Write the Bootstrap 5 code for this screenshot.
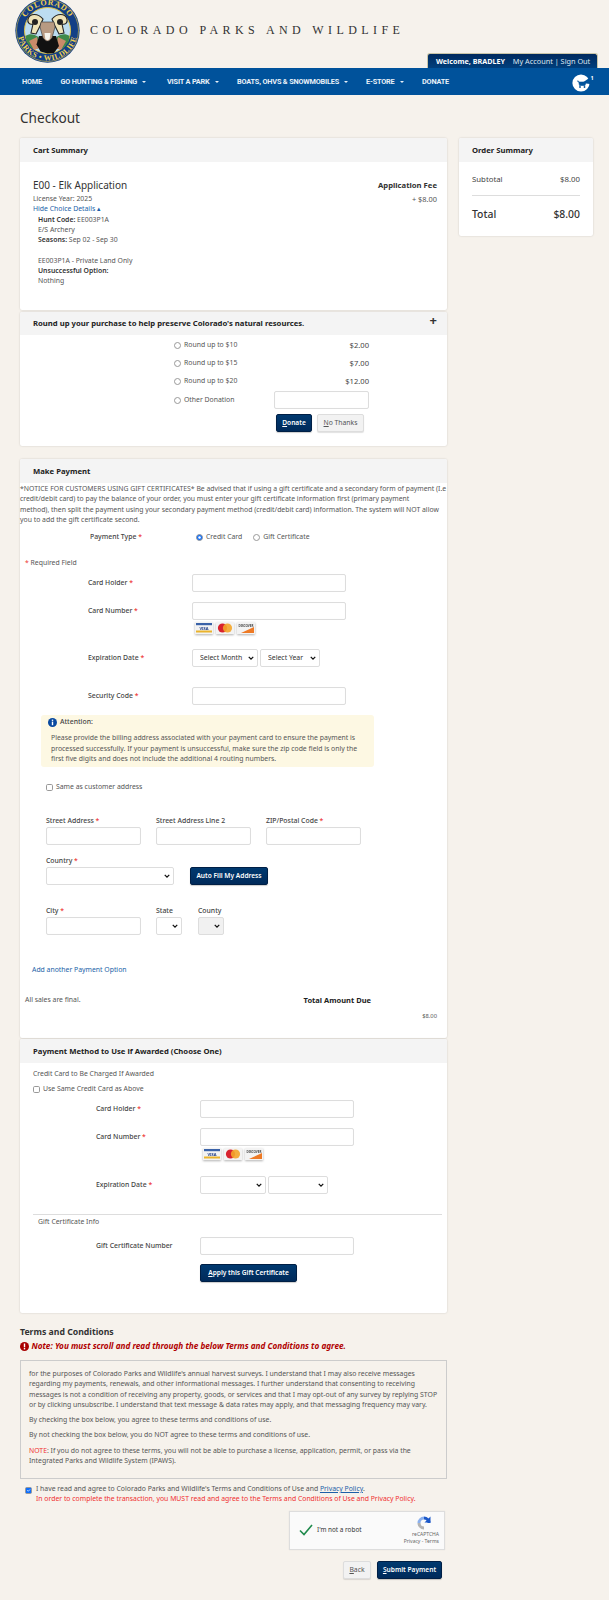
<!DOCTYPE html>
<html lang="en">
<head>
<meta charset="utf-8">
<title>Checkout</title>
<link href="https://cdn.jsdelivr.net/npm/bootstrap@5.3.0/dist/css/bootstrap.min.css" rel="stylesheet">
<style>
html,body{margin:0;background:#f6f2ec}
body{font-family:"Noto Sans","DejaVu Sans",sans-serif;font-size:6.87px;line-height:10.25px;color:#555;height:1600px;overflow:hidden}
a{color:#1c5fa8;text-decoration:none}
.top-band{height:68px;padding-left:15px}
.seal{margin-top:-2px;display:block;flex:none}
.site-name{font-family:"Liberation Serif",serif;font-size:12px;letter-spacing:4.42px;color:#333;margin:22px 0 0 10px;line-height:16px;white-space:nowrap}
.acct-tab{position:absolute;left:427px;top:53px;width:171px;height:15px;background:linear-gradient(#002a5e,#003f7d);border:1px solid #c9c5a8;border-bottom:0;border-radius:3px 3px 0 0;color:#dfe8f2;font-size:7.3px;line-height:14px;padding-left:8px;white-space:nowrap}
.acct-tab b{color:#fff;margin-right:6px;font-size:7.2px}
.site-bar{background:#00529b;height:27px;padding:0!important;--bs-navbar-nav-link-padding-x:0}
.site-bar .nav-link{color:#e8f0f8;font-family:Roboto,sans-serif;font-weight:700;font-size:7.3px;line-height:27px;padding:0;letter-spacing:-.17px;white-space:nowrap}
.site-bar .navbar-nav{margin-left:22px;gap:0}
.site-bar .dropdown-toggle::after{border-top-width:2.5px;border-left-width:2.5px;border-right-width:2.5px;margin-left:5px;vertical-align:1px}
.i1{width:38.5px}.i2{width:106.5px}.i3{width:70px}.i4{width:129px}.i5{width:56px}
.bag{position:absolute;left:572px;top:74px}
.page-body{padding:0 16px 0 20px}
.page-title{font-size:13.6px;line-height:20px;color:#333;margin:13px 0 10px 0;font-weight:400;padding:0}
.main-col{width:427px;flex:none}
.side-col{width:134px;flex:none;margin-left:12px}
.panel{border:0;border-radius:2px;box-shadow:0 0 2px rgba(0,0,0,.18);background:#fff}
.panel-head{background:#f4f4f4;border:0;border-radius:2px 2px 0 0!important;padding:0 0 0 13px;height:24px;line-height:24px;font-weight:700;color:#222;font-size:7.7px}
.panel-head.short{height:23px;line-height:22px;display:flex;justify-content:space-between}
.plus{font-size:13px;color:#333;margin-right:10px;line-height:16px}
.cart-body{height:148px;padding:15px 10px 0 13px;display:flex;justify-content:space-between}
.item-title{font-size:10px;line-height:17px;color:#333}
.indent{padding-left:5px}
.dk{color:#333;font-weight:600}
.fee{text-align:right;line-height:10px;font-size:7.4px}
.fee-name{font-weight:700;color:#333;font-size:7.7px;line-height:17px}
.sum-body{padding:0 13px;height:74px}
.sum-row{display:flex;justify-content:space-between;color:#444;font-size:7.8px;padding-top:12px;line-height:10px}
.sum-line{height:1px;background:#ddd;margin:11px 0 0}
.sum-total{display:flex;justify-content:space-between;font-weight:500;font-size:10.4px;color:#333;line-height:14px;padding-top:11px}
.mt1{margin-top:1px}.mt2{margin-top:2px}.mt5{margin-top:5px}.mt6{margin-top:6px}.mt9{margin-top:9px}.mt10{margin-top:10px}.mt11{margin-top:11px}.mt13{margin-top:13px}.mt14{margin-top:14px}.mt15{margin-top:15px}.mt20{margin-top:20px}.mt21{margin-top:21px}.mt23{margin-top:23px}.mt30{margin-top:30px}
.round-body{height:111px;padding:1px 0 0 154px}
.round-row{display:flex;align-items:center;height:18px;width:195px;justify-content:space-between}
.round-row label{display:flex;align-items:center}
.round-row.tall{height:20px}
.amt{font-size:7.6px;color:#444}
.form-check-input.tick{width:7px;height:7px;margin:0 3px 0 0;flex:none;border-color:#999}
.round-btns{margin:4px 0 0 102px;display:flex;gap:5px}
.field{border:1px solid #ddd;border-radius:2px;height:18px;padding:0 3px;font-size:6.6px;line-height:1;min-height:0;box-shadow:inset 0 0 1px rgba(0,0,0,.05)}
.w95{width:95px}.w154{width:154px}
.pick{border:1px solid #ddd;border-radius:2px;height:18px;min-height:0;padding:0 0 0 7px;font-size:6.9px;line-height:1;color:#333;background-image:url("data:image/svg+xml,%3csvg xmlns='http://www.w3.org/2000/svg' viewBox='0 0 16 16'%3e%3cpath fill='none' stroke='%23111' stroke-width='3.4' d='M2 5l6 6 6-6'/%3e%3c/svg%3e");background-position:right 3px center;background-size:6px 6px}
.w66{width:66px}.w60{width:60px}.w128{width:128px}.w26{width:26px}
.pick.grey{background-color:#f1f1f1}
.pay-a{height:579px}
.pay-b{height:274px;margin-top:1px}
.notice{white-space:nowrap}
.pay-type{margin:5px 0 0 70px;display:flex;line-height:14px}
.pay-type>span:first-child{width:106px;color:#444;font-weight:500}
.pay-type label{display:flex;align-items:center;margin-right:11px}
.req-note{margin:14px 0 0 5px}
.req{color:#e33}
.line{display:flex;margin-left:68px}
.line.far{margin-left:76px}
.tag{width:104px;flex:none;padding-top:3px;color:#444;font-weight:500;line-height:11px;white-space:nowrap}
.pays{margin:2px 0 0 175px;display:flex;gap:3px}
.pays svg{filter:drop-shadow(0 1px 1px rgba(0,0,0,.3))}
.pays.line-b{margin-left:183px}
.sel-wrap{display:flex;gap:2px}
.alert-box{margin:10px 0 0 21px;width:333px;height:52px;background:#fdf8e3;border-radius:3px;padding:2px 10px 0 7px;color:#555;white-space:nowrap}
.alert-head{display:flex;align-items:center;gap:3px;height:10px;margin:0 0 6px 0;color:#444;font-weight:500}
.alert-text{padding-left:3px}
.same{display:flex;align-items:center;margin-left:26px}
.addr{display:flex;margin-left:26px;gap:15px}
.addr label{display:block;color:#444;font-weight:500;margin-bottom:1px;line-height:10px;white-space:nowrap}
.county{margin-left:1px}
.btn-navy{background:linear-gradient(#00396f,#002a5a);color:#fff;border:1px solid #001f45;font-weight:600;font-size:6.6px;padding:0;height:18px;line-height:16px;border-radius:2px;white-space:nowrap;box-shadow:0 1px 1px rgba(0,0,0,.2)}
.btn-navy:hover{color:#fff}
.btn-pale{background:#f2f2f2;color:#555;border:1px solid #ddd;font-size:6.8px;padding:0;height:18px;line-height:16px;border-radius:2px;box-shadow:0 1px 1px rgba(0,0,0,.12)}
.w36{width:36px}.w47{width:47px}.w78{width:78px}.w97{width:97px}.w28{width:28px}.w65{width:65px}
.gap16{gap:16px}
.total-line{display:flex;justify-content:space-between;padding:0 76px 0 5px}
.total-line b{color:#222;font-size:7.5px;font-weight:700}
.due{text-align:right;padding-right:10px;font-size:5.8px;color:#555}
.sub-a{margin-left:13px}
.same-b{display:flex;align-items:center;margin-left:13px}
.hair{height:1px;background:#ddd;margin-left:13px;margin-right:5px}
.gift-head{margin:2px 0 0 18px}
.terms-h{font-size:8.7px;font-weight:700;color:#333;line-height:12px;margin-top:13px}
.terms-note{display:flex;align-items:center;gap:2.5px;color:#b00000;font-style:italic;font-weight:700;font-size:8.2px;margin-top:3px;line-height:10px;white-space:nowrap}
.terms-box{border:1px solid #ccc;height:119px;margin-top:9px;padding:8px 8px 0;white-space:nowrap;background:#f6f2ec}
.terms-box p{margin:0 0 5px}
.red{color:#f03030}
.agree{display:flex;margin:5px 0 0 5px;white-space:nowrap}
.agree .form-check-input.tick{margin:3px 4px 0 0}
.agree a{text-decoration:underline}
.robot{width:156px;height:39px;margin:6px 0 0 269px;background:#fafafa;border:1px solid #ddd;box-shadow:0 0 1px rgba(0,0,0,.1);display:flex;align-items:center;padding-left:9px;color:#333}
.robot-txt{margin-left:4px;font-size:6.4px}
.robot-r{margin-left:auto;margin-right:5px;text-align:right;font-size:5px;line-height:7px;color:#666;display:flex;flex-direction:column;align-items:flex-end;white-space:nowrap}
.robot-r svg{margin-right:7px}
.end-btns{display:flex;justify-content:flex-end;gap:6px;margin:11px 5px 0 0}
</style>
</head>
<body>
<div class="d-flex top-band">
<svg class="seal" width="65" height="65" viewBox="0 0 65 65" aria-hidden="true">
<defs>
<path id="arcTop" d="M7 32.5a25.5 25.5 0 0 1 51 0"/>
<path id="arcBot" d="M2.5 32.5a30 30 0 0 0 60 0"/>
</defs>
<circle cx="32.5" cy="32.5" r="32.2" fill="#123f86"/>
<circle cx="32.5" cy="32.5" r="31" fill="none" stroke="#e3c542" stroke-width=".6"/>
<circle cx="32.5" cy="32.5" r="23" fill="#bcdcf0" stroke="#e3c542" stroke-width="1"/>
<text font-family="Liberation Serif,serif" font-weight="700" font-size="8" fill="#f0d050" letter-spacing=".7"><textPath href="#arcTop" startOffset="50%" text-anchor="middle">COLORADO</textPath></text>
<text font-family="Liberation Serif,serif" font-weight="700" font-size="7.8" fill="#f0d050" letter-spacing=".5"><textPath href="#arcBot" startOffset="50%" text-anchor="middle">PARKS • WILDLIFE</textPath></text>
<path d="M10.5 38c4-3 9-2 13 1l-1 12-6-1-5-6z" fill="#3f8a4a"/>
<path d="M54.5 38c-4-3-9-2-13 1l1 12 6-1 5-6z" fill="#3f8a4a"/>
<path d="M14 43l8-4 2 11-5 2zM51 43l-8-4-2 11 5 2z" fill="#c98a6a"/>
<path d="M24 38l17 0 3 10-5 7-6.500 .6-7-2-4-7z" fill="#111"/>
<path d="M28 21c-5-6-13-6-15 0-1 4 2 6 5 5l-2 9 5 1 4-8z" fill="#f0e4b8" stroke="#222" stroke-width="1.1"/>
<path d="M37 21c5-6 13-6 15 0 1 4-2 6-5 5l2 9-5 1-4-8z" fill="#f0e4b8" stroke="#222" stroke-width="1.1"/>
<circle cx="20" cy="24" r="3" fill="#222"/><circle cx="45" cy="24" r="3" fill="#222"/>
<path d="M26 24l13 0 1 5-3 11-3 3h-3l-3-3-3-11z" fill="#b89a82" stroke="#333" stroke-width=".6"/>
<path d="M29.5 35h6l-.8 6-2.200 1.400-2.200-1.400z" fill="#f5f2ea"/>
</svg>
<div class="site-name">COLORADO PARKS AND WILDLIFE</div>
</div>
<div class="acct-tab"><b>Welcome, BRADLEY</b> My Account | Sign Out</div>
<nav class="navbar navbar-expand site-bar">
<ul class="navbar-nav">
<li class="nav-item i1"><a class="nav-link" href="#">HOME</a></li>
<li class="nav-item i2"><a class="nav-link dropdown-toggle" href="#">GO HUNTING &amp; FISHING</a></li>
<li class="nav-item i3"><a class="nav-link dropdown-toggle" href="#">VISIT A PARK</a></li>
<li class="nav-item i4"><a class="nav-link dropdown-toggle" href="#">BOATS, OHVS &amp; SNOWMOBILES</a></li>
<li class="nav-item i5"><a class="nav-link dropdown-toggle" href="#">E-STORE</a></li>
<li class="nav-item"><a class="nav-link" href="#">DONATE</a></li>
</ul>
</nav>
<svg class="bag" width="24" height="18" viewBox="0 0 24 18" aria-hidden="true">
<circle cx="9" cy="9" r="8.6" fill="#fff"/>
<path d="M10 9L18 3.500V10z" fill="#00529b"/>
<path d="M5 7h1.500l1 4.500h5.500l1-3.500H7" fill="#00529b" stroke="#00529b" stroke-width=".6"/>
<circle cx="8" cy="13" r=".9" fill="#00529b"/><circle cx="12.500" cy="13" r=".9" fill="#00529b"/>
<text x="18.500" y="6" font-size="5.500" font-weight="700" fill="#fff" font-family="Noto Sans,sans-serif">1</text>
</svg>

<div class="page-body">
<h1 class="page-title">Checkout</h1>
<div class="d-flex align-items-start">
<div class="main-col">

<div class="card panel">
<div class="card-header panel-head">Cart Summary</div>
<div class="cart-body">
<div>
<div class="item-title">E00 - Elk Application</div>
<div>License Year: 2025</div>
<div><a href="#">Hide Choice Details ▴</a></div>
<div class="indent"><span class="dk">Hunt Code:</span> EE003P1A</div>
<div class="indent">E/S Archery</div>
<div class="indent"><span class="dk">Seasons:</span> Sep 02 - Sep 30</div>
<div class="indent">&nbsp;</div>
<div class="indent">EE003P1A - Private Land Only</div>
<div class="indent dk">Unsuccessful Option:</div>
<div class="indent">Nothing</div>
</div>
<div class="fee"><div class="fee-name">Application Fee</div><div>+ $8.00</div></div>
</div>
</div>

<div class="card panel mt2">
<div class="card-header panel-head short"><span>Round up your purchase to help preserve Colorado's natural resources.</span><span class="plus">+</span></div>
<div class="round-body">
<div class="round-row"><label><input type="radio" name="r1" class="form-check-input tick">Round up to $10</label><span class="amt">$2.00</span></div>
<div class="round-row"><label><input type="radio" name="r1" class="form-check-input tick">Round up to $15</label><span class="amt">$7.00</span></div>
<div class="round-row"><label><input type="radio" name="r1" class="form-check-input tick">Round up to $20</label><span class="amt">$12.00</span></div>
<div class="round-row tall"><label><input type="radio" name="r1" class="form-check-input tick">Other Donation</label><input class="form-control field w95" type="text" aria-label="Other donation"></div>
<div class="round-btns"><button class="btn btn-navy w36"><u>D</u>onate</button><button class="btn btn-pale w47"><u>N</u>o Thanks</button></div>
</div>
</div>

<div class="card panel pay-a mt13">
<div class="card-header panel-head">Make Payment</div>
<div class="notice mt1">*NOTICE FOR CUSTOMERS USING GIFT CERTIFICATES* Be advised that if using a gift certificate and a secondary form of payment (I.e<br>credit/debit card) to pay the balance of your order, you must enter your gift certificate information first (primary payment<br>method), then split the payment using your secondary payment method (credit/debit card) information. The system will NOT allow<br>you to add the gift certificate second.</div>
<div class="pay-type"><span>Payment Type <span class="req">*</span></span><label><input type="radio" name="r2" class="form-check-input tick" checked>Credit Card</label><label><input type="radio" name="r2" class="form-check-input tick">Gift Certificate</label></div>
<div class="req-note"><span class="req">*</span> Required Field</div>
<div class="line mt6"><span class="tag">Card Holder <span class="req">*</span></span><input class="form-control field w154" type="text" aria-label="Card Holder"></div>
<div class="line mt10"><span class="tag">Card Number <span class="req">*</span></span><input class="form-control field w154" type="text" aria-label="Card Number"></div>
<div class="pays">
<svg width="18" height="13" viewBox="0 0 18 13" aria-hidden="true"><rect y="0" width="18" height="12" fill="#f3f3f3"/><rect x="1" y="1" width="16" height="2.200" fill="#3a62a8"/><rect x="1" y="8.500" width="16" height="2" fill="#eab32c"/><text x="9" y="7.600" text-anchor="middle" font-size="4" font-weight="700" fill="#23408a" font-family="Noto Sans,sans-serif">VISA</text></svg>
<svg width="18" height="13" viewBox="0 0 18 13" aria-hidden="true"><rect width="18" height="12" fill="#f3f3f3"/><circle cx="6.500" cy="6" r="4.600" fill="#d8232f"/><circle cx="11.500" cy="6" r="4.600" fill="#f4a62a" opacity=".9"/></svg>
<svg width="18" height="13" viewBox="0 0 18 13" aria-hidden="true"><rect width="18" height="12" fill="#f3f3f3"/><text x="9" y="4.600" text-anchor="middle" font-size="3" font-weight="700" fill="#444" font-family="Noto Sans,sans-serif">DISCOVER</text><path d="M4 11L17 5v6z" fill="#ee7a25"/></svg>
</div>
<div class="line mt14"><span class="tag">Expiration Date <span class="req">*</span></span><div class="sel-wrap"><select class="form-select pick w66" aria-label="Month"><option>Select Month</option></select><select class="form-select pick w60" aria-label="Year"><option>Select Year</option></select></div></div>
<div class="line mt20"><span class="tag">Security Code <span class="req">*</span></span><input class="form-control field w154" type="text" aria-label="Security Code"></div>
<div class="alert-box">
<div class="alert-head"><svg width="9" height="9" viewBox="0 0 9 9" aria-hidden="true"><circle cx="4.500" cy="4.500" r="4.500" fill="#0a4aa0"/><rect x="3.800" y="3.600" width="1.400" height="3.600" fill="#fff"/><rect x="3.800" y="1.600" width="1.400" height="1.300" fill="#fff"/></svg>Attention:</div>
<div class="alert-text">Please provide the billing address associated with your payment card to ensure the payment is<br>processed successfully. If your payment is unsuccessful, make sure the zip code field is only the<br>first five digits and does not include the additional 4 routing numbers.</div>
</div>
<div class="same mt15"><input type="checkbox" class="form-check-input tick">Same as customer address</div>
<div class="addr mt23">
<div class="w95"><label>Street Address <span class="req">*</span></label><input class="form-control field" type="text" aria-label="Street Address"></div>
<div class="w95"><label>Street Address Line 2</label><input class="form-control field" type="text" aria-label="Street Address Line 2"></div>
<div class="w95"><label>ZIP/Postal Code <span class="req">*</span></label><input class="form-control field" type="text" aria-label="ZIP"></div>
</div>
<div class="addr gap16 mt11 align-items-end">
<div class="w128"><label>Country <span class="req">*</span></label><select class="form-select pick" aria-label="Country"><option></option></select></div>
<button class="btn btn-navy w78">Auto Fill My Address</button>
</div>
<div class="addr mt21">
<div class="w95"><label>City <span class="req">*</span></label><input class="form-control field" type="text" aria-label="City"></div>
<div class="w26"><label>State</label><select class="form-select pick" aria-label="State"><option></option></select></div>
<div class="w26 county"><label>County</label><select class="form-select pick grey" aria-label="County" disabled><option></option></select></div>
</div>
<div class="mt30"><a class="ms-2 ps-1" href="#">Add another Payment Option</a></div>
<div class="total-line mt20"><span>All sales are final.</span><b>Total Amount Due</b></div>
<div class="due mt6">$8.00</div>
</div>

<div class="card panel pay-b">
<div class="card-header panel-head">Payment Method to Use if Awarded (Choose One)</div>
<div class="sub-a mt6">Credit Card to Be Charged If Awarded</div>
<div class="same-b mt5"><input type="checkbox" class="form-check-input tick">Use Same Credit Card as Above</div>
<div class="line far mt5"><span class="tag">Card Holder <span class="req">*</span></span><input class="form-control field w154" type="text" aria-label="Card Holder"></div>
<div class="line far mt10"><span class="tag">Card Number <span class="req">*</span></span><input class="form-control field w154" type="text" aria-label="Card Number"></div>
<div class="pays line-b">
<svg width="18" height="13" viewBox="0 0 18 13" aria-hidden="true"><rect y="0" width="18" height="12" fill="#f3f3f3"/><rect x="1" y="1" width="16" height="2.200" fill="#3a62a8"/><rect x="1" y="8.500" width="16" height="2" fill="#eab32c"/><text x="9" y="7.600" text-anchor="middle" font-size="4" font-weight="700" fill="#23408a" font-family="Noto Sans,sans-serif">VISA</text></svg>
<svg width="18" height="13" viewBox="0 0 18 13" aria-hidden="true"><rect width="18" height="12" fill="#f3f3f3"/><circle cx="6.500" cy="6" r="4.600" fill="#d8232f"/><circle cx="11.500" cy="6" r="4.600" fill="#f4a62a" opacity=".9"/></svg>
<svg width="18" height="13" viewBox="0 0 18 13" aria-hidden="true"><rect width="18" height="12" fill="#f3f3f3"/><text x="9" y="4.600" text-anchor="middle" font-size="3" font-weight="700" fill="#444" font-family="Noto Sans,sans-serif">DISCOVER</text><path d="M4 11L17 5v6z" fill="#ee7a25"/></svg>
</div>
<div class="line far mt15"><span class="tag">Expiration Date <span class="req">*</span></span><div class="sel-wrap"><select class="form-select pick w66" aria-label="Month"><option></option></select><select class="form-select pick w60" aria-label="Year"><option></option></select></div></div>
<div class="hair mt20"></div>
<div class="gift-head">Gift Certificate Info</div>
<div class="line far mt10"><span class="tag">Gift Certificate Number</span><input class="form-control field w154" type="text" aria-label="Gift Certificate Number"></div>
<div class="line far mt9"><span class="tag"></span><button class="btn btn-navy w97"><u>A</u>pply this Gift Certificate</button></div>
</div>

<div class="terms-h">Terms and Conditions</div>
<div class="terms-note"><svg width="9" height="9" viewBox="0 0 9 9" aria-hidden="true"><circle cx="4.500" cy="4.500" r="4.500" fill="#a80000"/><rect x="3.800" y="1.500" width="1.400" height="3.800" fill="#fff"/><rect x="3.800" y="6" width="1.400" height="1.400" fill="#fff"/></svg>Note: You must scroll and read through the below Terms and Conditions to agree.</div>
<div class="terms-box">
<p>for the purposes of Colorado Parks and Wildlife's annual harvest surveys. I understand that I may also receive messages<br>regarding my payments, renewals, and other informational messages. I further understand that consenting to receiving<br>messages is not a condition of receiving any property, goods, or services and that I may opt-out of any survey by replying STOP<br>or by clicking unsubscribe. I understand that text message &amp; data rates may apply, and that messaging frequency may vary.</p>
<p>By checking the box below, you agree to these terms and conditions of use.</p>
<p>By not checking the box below, you do NOT agree to these terms and conditions of use.</p>
<p><span class="red">NOTE</span>: If you do not agree to these terms, you will not be able to purchase a license, application, permit, or pass via the<br>Integrated Parks and Wildlife System (IPAWS).</p>
</div>
<div class="agree"><input type="checkbox" class="form-check-input tick" checked><div>I have read and agree to Colorado Parks and Wildlife's Terms and Conditions of Use and <a href="#">Privacy Policy</a>.<br><span class="red">In order to complete the transaction, you MUST read and agree to the Terms and Conditions of Use and Privacy Policy.</span></div></div>
<div class="robot">
<svg width="14" height="12" viewBox="0 0 14 12" aria-hidden="true"><path d="M1 6.500l4 4 8-9.500" fill="none" stroke="#1f8a4c" stroke-width="1.600"/></svg>
<span class="robot-txt">I'm not a robot</span>
<div class="robot-r">
<svg width="16" height="16" viewBox="0 0 16 16" aria-hidden="true"><path d="M8 1.500A6.500 6.500 0 0 1 14.500 8h-3A3.500 3.500 0 0 0 8 4.500z" fill="#1c58c8"/><path d="M14.500 1.500v6h-6z" fill="#1c58c8"/><path d="M1.500 8A6.500 6.500 0 0 1 8 1.500v3A3.500 3.500 0 0 0 4.500 8z" fill="#8ab0ee"/><path d="M1.500 8A6.500 6.500 0 0 0 8 14.500v-3A3.500 3.500 0 0 1 4.500 8z" fill="#b4b4b4"/></svg>
<span>reCAPTCHA</span><span>Privacy - Terms</span>
</div>
</div>
<div class="end-btns"><button class="btn btn-pale w28"><u>B</u>ack</button><button class="btn btn-navy w65"><u>S</u>ubmit Payment</button></div>
</div>

<div class="side-col">
<div class="card panel">
<div class="card-header panel-head">Order Summary</div>
<div class="sum-body">
<div class="sum-row"><span>Subtotal</span><span>$8.00</span></div>
<div class="sum-line"></div>
<div class="sum-total"><span>Total</span><span>$8.00</span></div>
</div>
</div>
</div>
</div>
</div>
<script src="https://cdn.jsdelivr.net/npm/bootstrap@5.3.0/dist/js/bootstrap.bundle.min.js"></script>
</body>
</html>
